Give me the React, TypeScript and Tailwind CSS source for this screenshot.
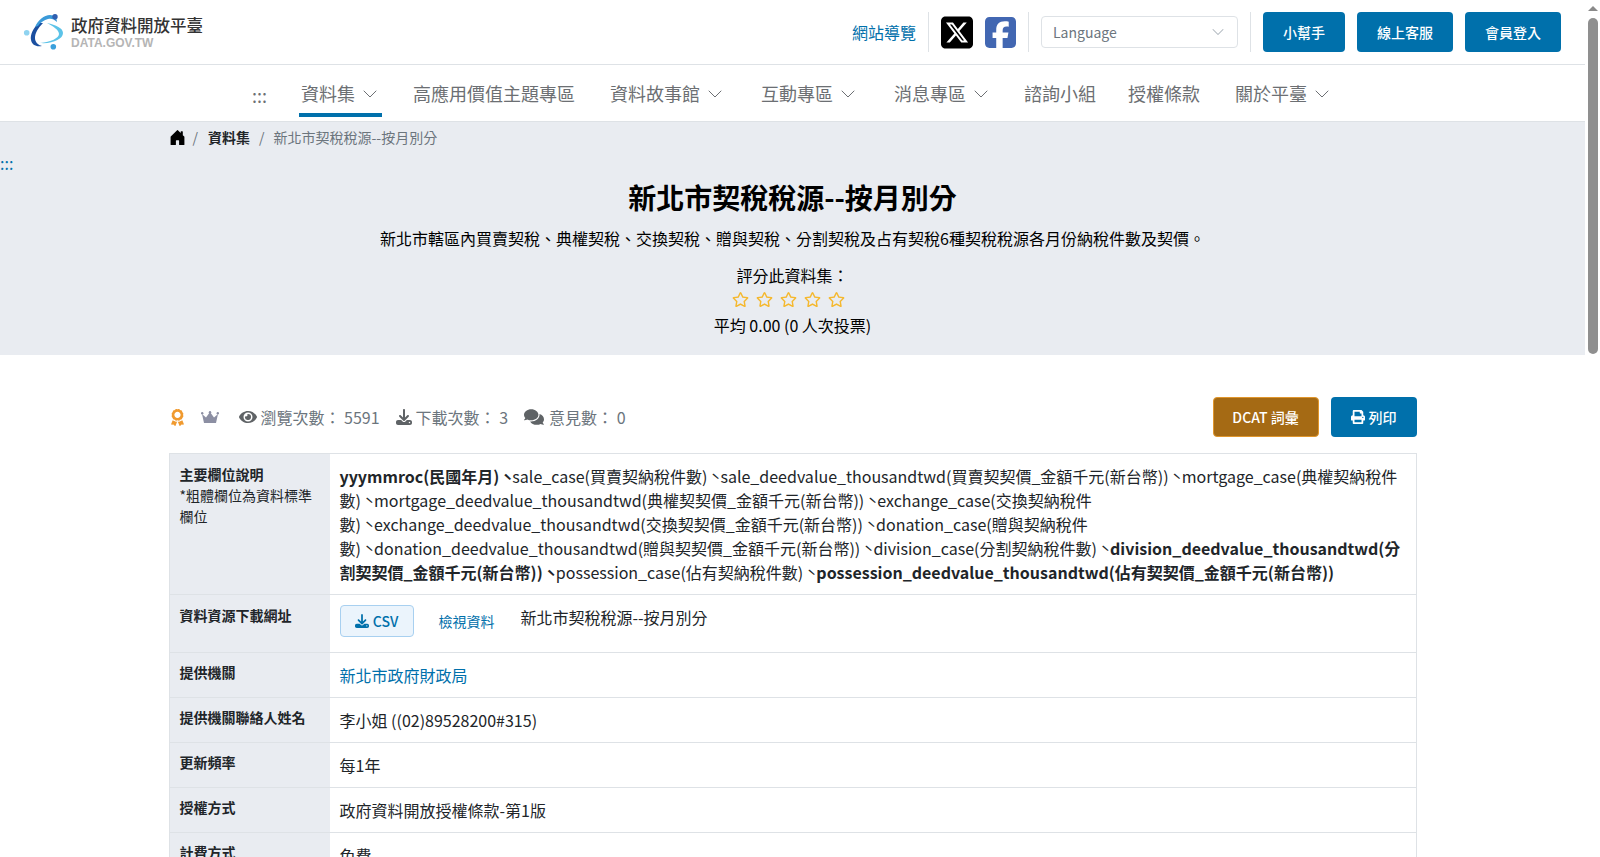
import { ChevronDown } from "lucide-react";
import { BsHouseDoorFill } from "react-icons/bs";
import { FaAward, FaComments, FaEye, FaPrint, FaRegStar } from "react-icons/fa";
import { FaDownload, FaSquareFacebook, FaSquareXTwitter } from "react-icons/fa6";

const navItems = [
  { label: "資料集", caret: true, active: true },
  { label: "高應用價值主題專區" },
  { label: "資料故事館", caret: true },
  { label: "互動專區", caret: true },
  { label: "消息專區", caret: true },
  { label: "諮詢小組" },
  { label: "授權條款" },
  { label: "關於平臺", caret: true },
];

function Logo() {
  return (
    <svg width="42" height="38" viewBox="0 0 42 38" fill="none">
      <path d="M24 10C33 12 40 15 40 20 40 26 30 31 17 30 28 29 36 25 36 21 36 17 30 13 24 10z" fill="#5cc3e8" />
      <path d="M16 10C10 15 7 22 8 27 9 32 13 34 19 33 15 32 12 29 12 25 12 20 15 15 20 10z" fill="#1b4fa0" />
      <path d="M12 14C15 7 21 2 27 2 31 2 34 5 34 9 31 6 28 5 25 6 21 7 18 9 15 13z" fill="#3a9ad9" />
      <circle cx="32" cy="3.700" r="2.700" fill="#2f5fb0" />
      <circle cx="3.700" cy="19.700" r="2.800" fill="#8fd3f0" />
      <circle cx="30.300" cy="33.700" r="2.800" fill="#3aa0dc" />
    </svg>
  );
}

function Crown() {
  return (
    <svg width="18" height="12" viewBox="0 0 18 12" fill="#8c8fa3">
      <path d="M1 3 5 6.500 9 1l4 5.500L17 3l-2 9H3z" />
      <circle cx="1.200" cy="2.200" r="1.200" />
      <circle cx="9" cy="1.200" r="1.200" />
      <circle cx="16.800" cy="2.200" r="1.200" />
    </svg>
  );
}

function Sep() {
  return <div className="h-10 w-px bg-[#dee2e6]" />;
}

function TopButton({ children, w }: { children: string; w: string }) {
  return (
    <button className={`h-10 ${w} rounded bg-[#0070ab] text-sm font-medium text-white`}>{children}</button>
  );
}

function Row({ label, children }: { label: React.ReactNode; children: React.ReactNode }) {
  return (
    <div className="flex border-b border-[#dee2e6]">
      <div className="w-[160px] shrink-0 bg-[#e9ecf1] p-[10px] text-sm leading-[21px] text-[#212529]">{label}</div>
      <div className="min-w-0 flex-1 p-[10px] leading-6">{children}</div>
    </div>
  );
}

function Label({ children }: { children: string }) {
  return <b className="-mt-px block">{children}</b>;
}

// the source page separates field names with this tone mark, not a real comma
function Mark() {
  return <span className="pl-[3.500px] align-[-4px] leading-[0]">ˋ</span>;
}

function Scrollbar() {
  return (
    <div className="flex w-[15px] shrink-0 flex-col items-center bg-white">
      <div className="mt-[6px] h-0 w-0 border-x-[5px] border-b-[5px] border-x-transparent border-b-[#8a8a8a]" />
      <div className="mt-[7px] h-[336px] w-[10px] rounded-[5px] bg-[#8f8f8f]" />
    </div>
  );
}

export default function App() {
  return (
    <div className="flex h-[857px] overflow-hidden bg-white font-['Noto_Sans_CJK_TC','Noto_Sans',sans-serif] text-[#212529]">
      <div className="min-w-0 flex-1">
        {/* Top bar */}
        <header className="flex h-[65px] items-center justify-between border-b border-[#dee2e6] pl-[23px] pr-6">
          <div className="flex items-center gap-[6px]">
            <Logo />
            <div>
              <div className="text-[16.500px] font-medium leading-[22px] text-[#333]">政府資料開放平臺</div>
              <div className="font-['Liberation_Sans',sans-serif] text-xs font-bold leading-[14px] text-[#b5b5b5]">DATA.GOV.TW</div>
            </div>
          </div>
          <div className="flex items-center gap-3">
            <a className="text-base text-[#0070ab]">網站導覽</a>
            <Sep />
            <FaSquareXTwitter className="h-[37px] w-[32px] text-black" />
            <FaSquareFacebook className="h-[37px] w-[31px] text-[#4267b2]" />
            <Sep />
            <div className="flex h-8 w-[197px] items-center justify-between rounded border border-[#dee2e6] pl-[11px] pr-[9px] text-sm text-[#6c757d]">
              <span>Language</span>
              <ChevronDown size={20} strokeWidth={1.25} className="text-[#adb5bd]" />
            </div>
            <Sep />
            <TopButton w="w-[82px]">小幫手</TopButton>
            <TopButton w="w-[96px]">線上客服</TopButton>
            <TopButton w="w-[96px]">會員登入</TopButton>
          </div>
        </header>

        {/* Main nav */}
        <nav className="flex h-[57px] items-stretch justify-center gap-[28px] border-b border-[#dee2e6] pb-1 pl-[2px] text-[18px] text-[#6c6f73]">
          <span className="mr-[1px] flex items-center pt-[9px]">:::</span>
          {navItems.map((item) => (
            <a
              key={item.label}
              className={`flex items-center gap-[3px] border-b-4 px-[2px] pt-[9px] ${item.caret ? "ml-[3px] mr-[1px]" : ""} ${item.active ? "border-[#0070ab]" : "border-transparent"}`}
            >
              {item.label}
              {item.caret && <ChevronDown size={24} strokeWidth={1} className="-mr-[2px]" />}
            </a>
          ))}
        </nav>

        {/* Hero */}
        <section className="h-[233px] bg-[#e9ecf1]">
          <div className="mx-auto flex w-[1248px] items-center pt-[5px] text-sm leading-[21px]">
            <BsHouseDoorFill className="text-[17px] text-black" />
            <span className="ml-[7px] text-[#6c757d]">/</span>
            <span className="ml-[10px] font-bold">資料集</span>
            <span className="ml-[9px] text-[#6c757d]">/</span>
            <span className="ml-[9px] text-[#6c757d]">新北市契稅稅源--按月別分</span>
          </div>
          <div className="mt-[5px] h-5 text-base leading-5 text-[#0070ab]">:::</div>
          <h1 className="mt-[3px] text-center text-[28px] font-bold leading-[42px] text-black">新北市契稅稅源--按月別分</h1>
          <p className="mt-[8px] text-center leading-6 text-black">
            新北市轄區內買賣契稅、典權契稅、交換契稅、贈與契稅、分割契稅及占有契稅6種契稅稅源各月份納稅件數及契價。
          </p>
          <div className="mt-[13px] text-center leading-6 text-black">評分此資料集：</div>
          <div className="flex h-6 items-center justify-center gap-[7px] pr-2 text-[17px] text-[#f5b82e]">
            <FaRegStar />
            <FaRegStar />
            <FaRegStar />
            <FaRegStar />
            <FaRegStar />
          </div>
          <div className="mt-[2px] text-center leading-6 text-black">平均 0.00 (0 人次投票)</div>
        </section>

        {/* Content */}
        <main className="mx-auto w-[1248px]">
          <div className="flex h-[98px] items-center justify-between pb-4 pt-[42px]">
            <div className="flex items-center text-[#6c757d]">
              <FaAward className="text-[17px] text-[#f09a2f]" />
              <span className="ml-[15px]">
                <Crown />
              </span>
              <FaEye className="ml-[20px] text-[18px] text-[#5f6366]" />
              <span className="ml-[4px]">瀏覽次數： 5591</span>
              <FaDownload className="ml-[16px] text-[16px] text-[#5f6366]" />
              <span className="ml-[4px]">下載次數： 3</span>
              <FaComments className="ml-4 text-[20px] text-[#5f6366]" />
              <span className="ml-[5px]">意見數： 0</span>
            </div>
            <div className="flex gap-3">
              <button className="h-10 w-[106px] rounded border border-[#e0962c] bg-[#a56a14] text-sm font-medium text-white">DCAT 詞彙</button>
              <button className="flex h-10 w-[86px] items-center justify-center gap-1 rounded bg-[#0070ab] text-sm font-medium text-white">
                <FaPrint />
                列印
              </button>
            </div>
          </div>

          <div className="border border-b-0 border-[#dee2e6]">
            <Row
              label={
                <>
                  <b className="block">主要欄位說明</b>
                  *粗體欄位為資料標準欄位
                </>
              }
            >
              <b>yyymmroc(民國年月)<Mark /></b>sale_case(買賣契納稅件數)<Mark />sale_deedvalue_thousandtwd(買賣契契價_金額千元(新台幣))<Mark />mortgage_case(典權契納稅件數)<Mark />mortgage_deedvalue_thousandtwd(典權契契價_金額千元(新台幣))<Mark />exchange_case(交換契納稅件數)<Mark />exchange_deedvalue_thousandtwd(交換契契價_金額千元(新台幣))<Mark />donation_case(贈與契納稅件數)<Mark />donation_deedvalue_thousandtwd(贈與契契價_金額千元(新台幣))<Mark />division_case(分割契納稅件數)<Mark /><b>division_deedvalue_thousandtwd(分割契契價_金額千元(新台幣))<Mark /></b>possession_case(佔有契納稅件數)<Mark /><b>possession_deedvalue_thousandtwd(佔有契契價_金額千元(新台幣))</b>
            </Row>
            <Row label={<b>資料資源下載網址</b>}>
              <div className="flex h-[37px] items-start">
                <a className="flex h-8 w-[74px] items-center justify-center gap-1 rounded border border-[#a8d0f0] bg-[#ebf4fc] text-sm font-medium text-[#0070ab]">
                  <FaDownload className="text-[14px]" />
                  CSV
                </a>
                <a className="ml-[25px] mt-[4px] text-sm leading-6 text-[#0070ab]">檢視資料</a>
                <span className="ml-[26px]">新北市契稅稅源--按月別分</span>
              </div>
            </Row>
            <Row label={<Label>提供機關</Label>}>
              <a className="text-[#0070ab]">新北市政府財政局</a>
            </Row>
            <Row label={<Label>提供機關聯絡人姓名</Label>}>李小姐 ((02)89528200#315)</Row>
            <Row label={<Label>更新頻率</Label>}>每1年</Row>
            <Row label={<Label>授權方式</Label>}>政府資料開放授權條款-第1版</Row>
            <Row label={<Label>計費方式</Label>}>免費</Row>
          </div>
        </main>
      </div>
      <Scrollbar />
    </div>
  );
}
